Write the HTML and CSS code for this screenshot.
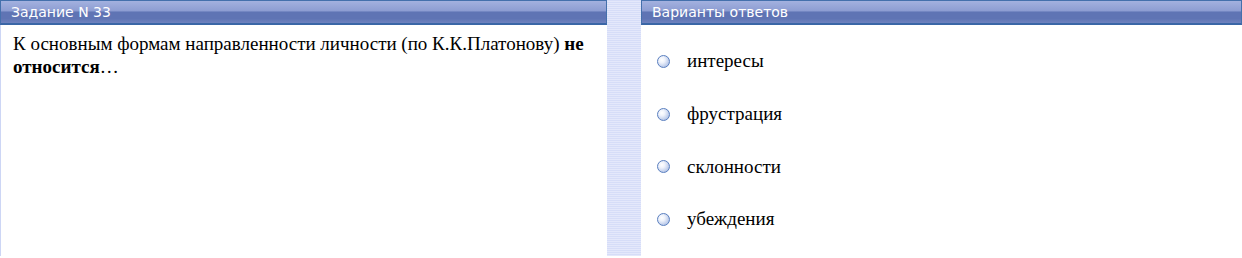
FILE: index.html
```html
<!DOCTYPE html>
<html>
<head>
<meta charset="utf-8">
<title>Задание N 33</title>
<link rel="stylesheet" href="styles.css">
</head>
<body>
<div class="test">
	<div class="panel question">
		<div class="bar">Задание N 33</div>
		<p class="text">К основным формам направленности личности (по К.К.Платонову) <b>не</b> <b>относится</b>…</p>
	</div>
	<div class="gap"></div>
	<div class="panel answers">
		<div class="bar">Варианты ответов</div>
		<ul class="options">
			<li><span class="radio"></span>интересы</li>
			<li><span class="radio"></span>фрустрация</li>
			<li><span class="radio"></span>склонности</li>
			<li><span class="radio"></span>убеждения</li>
		</ul>
	</div>
</div>
</body>
</html>
```

FILE: styles.css
```css
body{
	margin: 0;
	background: #fff;
	font-family: 'Liberation Serif', 'Times New Roman', serif;
	font-size: 19px;
	color: #000;
}
.test{
	display: flex;
	height: 256px;
}
.panel{
	background: #fff;
}
.question{
	width: 607px;
	border-left: 1px solid #cdd6f5;
	box-sizing: border-box;
}
.answers{
	flex: 1;
}
.gap{
	width: 34px;
	background: repeating-linear-gradient(to bottom, #d6ddf8 0, #d6ddf8 1px, #e4e8fb 1px, #e4e8fb 2px);
}
.bar{
	height: 22px;
	border-top: 1px solid #4470ac;
	border-bottom: 2px solid #3a66a6;
	border-left: 1px solid #4470ac;
	border-right: 1px solid #4470ac;
	background: linear-gradient(to bottom, #a3b1df 0, #8d9dd2 45%, #5f74b4 50%, #5f74b4 80%, #6e82bf 100%);
	color: #fff;
	font-family: 'DejaVu Sans', Verdana, sans-serif;
	font-size: 14px;
	line-height: 23px;
	padding-left: 10px;
}
.question .bar{
	margin-left: -1px;
}
.text{
	margin: 0;
	padding: 7px 12px;
	line-height: 23px;
}
.options{
	list-style: none;
	margin: 0;
	padding: 10px 0 0 16px;
}
.options li{
	display: flex;
	align-items: center;
	height: 52.7px;
}
.radio{
	width: 11px;
	height: 11px;
	border-radius: 50%;
	border: 1px solid #5a7fbf;
	background: radial-gradient(circle at 35% 35%, #fff 0, #eef2fb 30%, #bccbea 70%, #94acdc 100%);
	margin: 0 17px 0 0;
	flex: none;
}
```
